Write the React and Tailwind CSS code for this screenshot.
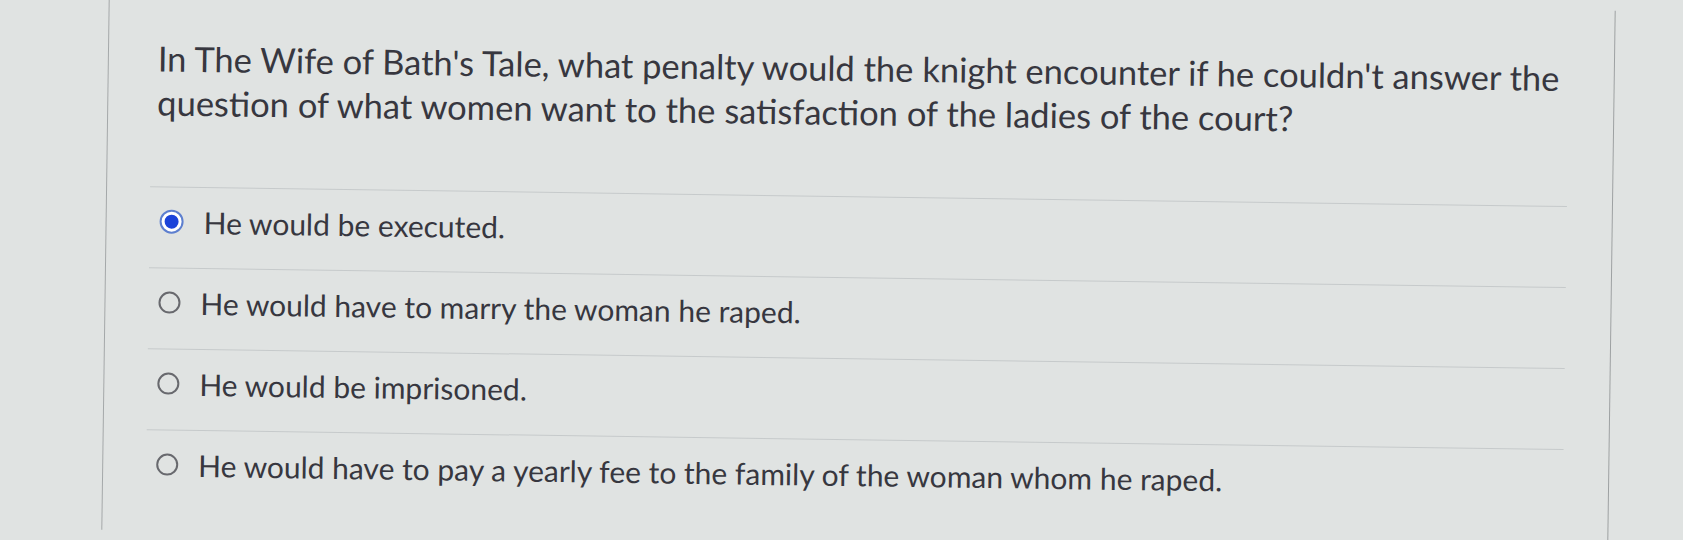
import React from "react";

const options = [
  { text: "He would be executed.", selected: true },
  { text: "He would have to marry the woman he raped.", selected: false },
  { text: "He would be imprisoned.", selected: false },
  {
    text: "He would have to pay a yearly fee to the family of the woman whom he raped.",
    selected: false,
  },
];

function Radio({ selected }) {
  if (selected) {
    return (
      <div className="w-[24px] h-[24px] rounded-full border-[2px] border-[#5d7fcf] bg-white flex items-center justify-center shrink-0">
        <div className="w-[14px] h-[14px] rounded-full bg-[#1b43d9]" />
      </div>
    );
  }
  return <div className="w-[22px] h-[22px] rounded-full border-[2px] border-[#68696e] shrink-0" />;
}

export default function App() {
  return (
    <div
      className="w-[1683px] h-[540px] overflow-hidden bg-[#e0e3e2]"
      style={{ fontFamily: "Lato, 'Noto Sans', sans-serif" }}
    >
      <div className="flex h-full rotate-[0.8deg]">
        <div className="w-[106px] shrink-0 border-r border-[#a4a8a9]" />
        <div className="w-[1506px] shrink-0 border-r border-[#9da1a2] pl-[43px] pt-[46px]">
          <p className="pl-[6px] w-[1440px] text-[34.5px] leading-[44px] text-[#37373f]">
            In The Wife of Bath's Tale, what penalty would the knight encounter if he couldn't answer the question of what women want to the satisfaction of the ladies of the court?
          </p>
          <div className="mt-[62px] w-[1417px]">
            {options.map((o, i) => (
              <div
                key={i}
                className="border-t border-[#c6cacb] h-[81px] flex items-start pt-[14px] pl-[10px]"
              >
                <div className="flex items-center h-[40px] gap-[20px]">
                  <Radio selected={o.selected} />
                  <span className="text-[30px] leading-[38px] text-[#37373f]">{o.text}</span>
                </div>
              </div>
            ))}
          </div>
        </div>
        <div className="flex-1" />
      </div>
    </div>
  );
}
